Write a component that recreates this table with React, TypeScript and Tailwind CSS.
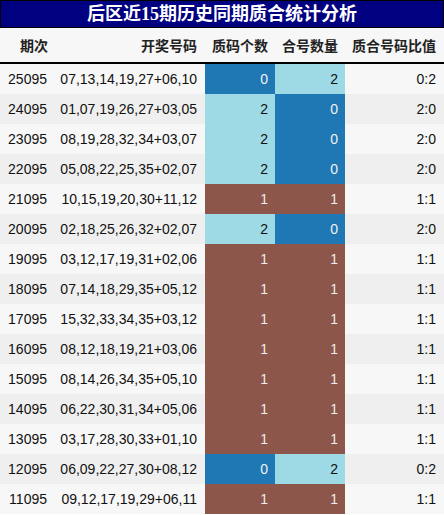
const rows: [string, string, number, number][] = [
  ["25095", "07,13,14,19,27+06,10", 0, 2],
  ["24095", "01,07,19,26,27+03,05", 2, 0],
  ["23095", "08,19,28,32,34+03,07", 2, 0],
  ["22095", "05,08,22,25,35+02,07", 2, 0],
  ["21095", "10,15,19,20,30+11,12", 1, 1],
  ["20095", "02,18,25,26,32+02,07", 2, 0],
  ["19095", "03,12,17,19,31+02,06", 1, 1],
  ["18095", "07,14,18,29,35+05,12", 1, 1],
  ["17095", "15,32,33,34,35+03,12", 1, 1],
  ["16095", "08,12,18,19,21+03,06", 1, 1],
  ["15095", "08,14,26,34,35+05,10", 1, 1],
  ["14095", "06,22,30,31,34+05,06", 1, 1],
  ["13095", "03,17,28,30,33+01,10", 1, 1],
  ["12095", "06,09,22,27,30+08,12", 0, 2],
  ["11095", "09,12,17,19,29+06,11", 1, 1],
];

const cellColor = (v: number) => {
  if (v === 0) return "bg-[#1f77b4] text-[#f2f2f2]";
  if (v === 2) return "bg-[#9edae5] text-[#111]";
  return "bg-[#8c564b] text-[#ececec]";
};

const cols = "grid grid-cols-[55px_150px_70px_70px_1fr]";

export default function App() {
  return (
    <div className="w-[444px] bg-white font-['Liberation_Sans','Noto_Sans_CJK_SC',sans-serif] text-[14px] text-[#111]">
      <div className="h-[28px] bg-[#000080] border border-black flex items-center justify-center text-white font-bold text-[18px] leading-none font-['Liberation_Serif','Noto_Sans_CJK_SC',serif]">
        后区近15期历史同期质合统计分析
      </div>
      <div className={`${cols} h-[36px] bg-[#f7f7f7] border-b-2 border-black font-bold font-['Noto_Sans_CJK_SC',sans-serif] text-[#222] items-center text-right`}>
        <div className="pr-[7px]">期次</div>
        <div className="pr-[8px]">开奖号码</div>
        <div className="pr-[7px]">质码个数</div>
        <div className="pr-[7px]">合号数量</div>
        <div className="pr-[8px]">质合号码比值</div>
      </div>
      {rows.map(([q, nums, z, h], i) => (
        <div
          key={q}
          className={`${cols} h-[30px] text-right ${i % 2 === 0 ? "bg-[#f7f7f7]" : "bg-[#efefef]"}`}
        >
          <div className="pr-[8px] flex items-center justify-end">{q}</div>
          <div className="pr-[8px] flex items-center justify-end">{nums}</div>
          <div className={`pr-[7px] flex items-center justify-end ${cellColor(z)}`}>{z}</div>
          <div className={`pr-[7px] flex items-center justify-end ${cellColor(h)}`}>{h}</div>
          <div className="pr-[8px] flex items-center justify-end">{`${z}:${h}`}</div>
        </div>
      ))}
    </div>
  );
}
